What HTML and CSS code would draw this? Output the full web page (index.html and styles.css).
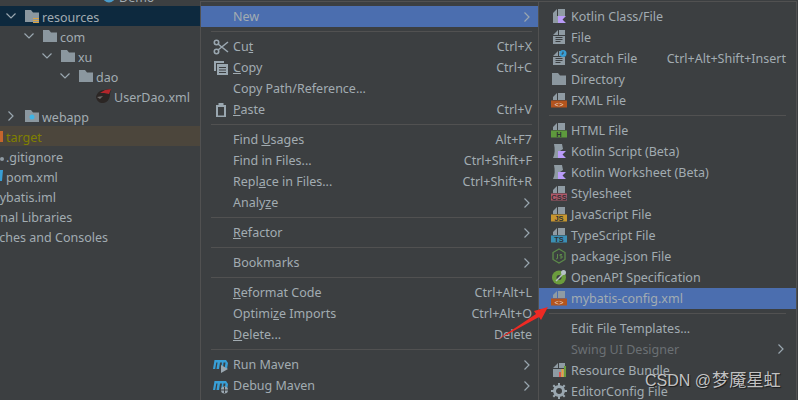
FILE: index.html
```html
<!DOCTYPE html>
<html>
<head>
    <title>New file menu</title>
    <link rel="stylesheet" href="styles.css">
</head>
<body>
    <svg class="sprite" width="0" height="0">
        <defs>
            <symbol id="chev-down" viewBox="0 0 16 16"><path d="M3.5 5.5 8 10l4.500-4.500" fill="none" stroke="#9aa7b0" stroke-width="1.200"/></symbol>
            <symbol id="chev-right" viewBox="0 0 16 16"><path d="M5.500 3.500 10 8l-4.500 4.500" fill="none" stroke="#9aa7b0" stroke-width="1.200"/></symbol>
            <symbol id="folder" viewBox="0 0 16 16"><path d="M1 2h6l2 2.500h6V14H1z" fill="#8b979f"/></symbol>
            <symbol id="doc" viewBox="0 0 16 16"><path d="M2 15V6l5-5v5H2zM2 7h12v8H2zM8 1h6v5H8z" fill="#8f9ba3"/></symbol>
            <symbol id="doc-top" viewBox="0 0 16 16"><path d="M2 8V5l4-4v7zM7 1h7v7H7z" fill="#8f9ba3"/></symbol>
            <symbol id="kotlin-mark" viewBox="0 0 16 16"><path d="M7 8h8l-3.500 3.500L15 15H7z" fill="#b99bf8"/></symbol>
        </defs>
    </svg>

    <div class="tree">
        <div class="tree-row lvl-3"><span class="arrow"></span><span class="icon"></span><svg class="icon"><circle cx="8" cy="8" r="6.500" fill="#4a9bc9"/></svg><span class="name">Demo</span></div>
        <div class="tree-row selected"><svg class="arrow"><use href="#chev-down"/></svg><svg class="icon"><use href="#folder"/><path d="M9 10h6v1H9zM9 12h6v1H9zM9 14h6v1H9z" fill="#d9a343"/></svg><span class="name">resources</span></div>
        <div class="tree-row lvl-1"><svg class="arrow"><use href="#chev-down"/></svg><svg class="icon"><use href="#folder"/></svg><span class="name">com</span></div>
        <div class="tree-row lvl-2"><svg class="arrow"><use href="#chev-down"/></svg><svg class="icon"><use href="#folder"/></svg><span class="name">xu</span></div>
        <div class="tree-row lvl-3"><svg class="arrow"><use href="#chev-down"/></svg><svg class="icon"><use href="#folder"/></svg><span class="name">dao</span></div>
        <div class="tree-row lvl-4"><span class="arrow"></span><svg class="icon"><path d="M0 9c1-4 4-7 8-7l7-1-1 5c0 5-3 9-7 9-4 0-6-2-7-6z" fill="#2b2624"/><path d="M4 5l5-3 6-1-2 5-5-1z" fill="#b3262b"/><path d="M1 9l6-1-3 3z" fill="#6e6a68"/></svg><span class="name">UserDao.xml</span></div>
        <div class="tree-row"><svg class="arrow"><use href="#chev-right"/></svg><svg class="icon"><use href="#folder"/><circle cx="8" cy="9" r="2.500" fill="#3fb4e6"/></svg><span class="name">webapp</span></div>
        <div class="tree-row excluded"><span class="arrow"></span><svg class="icon"><rect x="1" y="3" width="14" height="11" fill="#c4652d"/></svg><span class="name">target</span></div>
        <div class="tree-row lvl-root"><span class="arrow"></span><svg class="icon"><circle cx="14" cy="11" r="2" fill="#8f9ba3"/></svg><span class="name">.gitignore</span></div>
        <div class="tree-row lvl-root"><span class="arrow"></span><svg class="icon"><path d="M10 2h5l-1 11h-3z" fill="#389fd6"/></svg><span class="name">pom.xml</span></div>
        <div class="tree-row lvl-iml"><span class="arrow"></span><span class="icon"></span><span class="name">mybatis.iml</span></div>
        <div class="tree-row lvl-lib"><span class="arrow"></span><span class="icon"></span><span class="name">External Libraries</span></div>
        <div class="tree-row lvl-lib"><span class="arrow"></span><span class="icon"></span><span class="name">Scratches and Consoles</span></div>
    </div>

    <div class="menu main-menu">
        <div class="item active"><span class="item-icon"></span><span class="label">New</span><svg class="sub"><use href="#chev-right"/></svg></div>
        <div class="sep"></div>
        <div class="item">
            <svg class="item-icon" viewBox="0 0 16 16"><g fill="none" stroke="#9aa7b0" stroke-width="1.600"><circle cx="3.500" cy="3.500" r="2.200"/><circle cx="3.500" cy="12.500" r="2.200"/><path d="M5 5l10 8M5 11L15 3"/></g></svg>
            <span class="label">Cu<u>t</u></span><span class="keys">Ctrl+X</span>
        </div>
        <div class="item">
            <svg class="item-icon" viewBox="0 0 16 16"><path d="M1 1h10v2H3v8H1z" fill="#9aa7b0"/><path d="M4 4h11v11H4z" fill="#9aa7b0"/><path d="M6 7h7v1H6zM6 9.500h7v1H6zM6 12h7v1H6z" fill="#3c3f41"/></svg>
            <span class="label"><u>C</u>opy</span><span class="keys">Ctrl+C</span>
        </div>
        <div class="item"><span class="item-icon"></span><span class="label">Copy Path/Reference...</span></div>
        <div class="item">
            <svg class="item-icon" viewBox="0 0 16 16"><path d="M5.500 1h5v2h2.500v12H3V3h2.500z" fill="#9aa7b0"/><path d="M5 5h6v8.500H5z" fill="#3c3f41"/></svg>
            <span class="label"><u>P</u>aste</span><span class="keys">Ctrl+V</span>
        </div>
        <div class="sep"></div>
        <div class="item"><span class="item-icon"></span><span class="label">Find <u>U</u>sages</span><span class="keys">Alt+F7</span></div>
        <div class="item"><span class="item-icon"></span><span class="label">Find in Files...</span><span class="keys">Ctrl+Shift+F</span></div>
        <div class="item"><span class="item-icon"></span><span class="label">Repl<u>a</u>ce in Files...</span><span class="keys">Ctrl+Shift+R</span></div>
        <div class="item"><span class="item-icon"></span><span class="label">Analy<u>z</u>e</span><svg class="sub"><use href="#chev-right"/></svg></div>
        <div class="sep"></div>
        <div class="item"><span class="item-icon"></span><span class="label"><u>R</u>efactor</span><svg class="sub"><use href="#chev-right"/></svg></div>
        <div class="sep"></div>
        <div class="item"><span class="item-icon"></span><span class="label">Bookmarks</span><svg class="sub"><use href="#chev-right"/></svg></div>
        <div class="sep"></div>
        <div class="item"><span class="item-icon"></span><span class="label"><u>R</u>eformat Code</span><span class="keys">Ctrl+Alt+L</span></div>
        <div class="item"><span class="item-icon"></span><span class="label">Optimi<u>z</u>e Imports</span><span class="keys">Ctrl+Alt+O</span></div>
        <div class="item"><span class="item-icon"></span><span class="label"><u>D</u>elete...</span><span class="keys">Delete</span></div>
        <div class="sep"></div>
        <div class="item">
            <svg class="item-icon" viewBox="0 0 16 16"><path d="M0 12l1.500-9h11.500L15 6l-1 6h-2.500l1-6.500h-2L10 12H8l1-6.500H7L6 12H3.500l1-6.500H3.300L2.200 12z" fill="#389fd6"/><path d="M8 8l7 4-7 4z" fill="#9aa7b0"/></svg>
            <span class="label">Run Maven</span><svg class="sub"><use href="#chev-right"/></svg>
        </div>
        <div class="item">
            <svg class="item-icon" viewBox="0 0 16 16"><path d="M0 12l1.500-9h11.500L15 6l-1 6h-2.500l1-6.500h-2L10 12H8l1-6.500H7L6 12H3.500l1-6.500H3.300L2.200 12z" fill="#389fd6"/><circle cx="11.500" cy="12" r="3.500" fill="#9aa7b0"/><path d="M8 12h7M11.500 9v6" stroke="#3c3f41"/></svg>
            <span class="label">Debug Maven</span><svg class="sub"><use href="#chev-right"/></svg>
        </div>
    </div>

    <div class="menu sub-menu">
        <div class="item"><svg class="item-icon" viewBox="0 0 16 16"><path d="M2 8V5l4-4v7zM7 1h7v7H7zM2 8h5v7H2z" fill="#8f9ba3"/><use href="#kotlin-mark" width="16" height="16"/></svg><span class="label">Kotlin Class/File</span></div>
        <div class="item"><svg class="item-icon" viewBox="0 0 16 16"><use href="#doc" width="16" height="16"/><path d="M4.500 8h7v1h-7zM4.500 10h7v1h-7zM4.500 12h5v1h-5z" fill="#3c3f41"/></svg><span class="label">File</span></div>
        <div class="item"><svg class="item-icon" viewBox="0 0 16 16"><use href="#doc" width="16" height="16"/><path d="M4.500 8h7v1h-7zM4.500 10h7v1h-7zM4.500 12h5v1h-5z" fill="#3c3f41"/><circle cx="12" cy="3.500" r="3.500" fill="#389fd6"/><path d="M12 1.500v2.500h-1.500" stroke="#3c3f41" fill="none"/></svg><span class="label">Scratch File</span><span class="keys">Ctrl+Alt+Shift+Insert</span></div>
        <div class="item"><svg class="item-icon"><use href="#folder"/></svg><span class="label">Directory</span></div>
        <div class="item"><svg class="item-icon"><use href="#doc-top"/><rect y="8.500" width="16" height="7" fill="#b3541e"/></svg><span class="badge">&lt;&gt;</span><span class="label">FXML File</span></div>
        <div class="sep"></div>
        <div class="item"><svg class="item-icon"><use href="#doc-top"/><rect y="8.500" width="16" height="7" fill="#5e9a3d"/></svg><span class="badge dark">H</span><span class="label">HTML File</span></div>
        <div class="item"><svg class="item-icon" viewBox="0 0 16 16"><path d="M3 1h8l1 5-3 2v7H2c2-4 2-9 1-14z" fill="#8f9ba3"/><use href="#kotlin-mark" width="16" height="16"/></svg><span class="label">Kotlin Script (Beta)</span></div>
        <div class="item"><svg class="item-icon" viewBox="0 0 16 16"><path d="M3 1h8l1 5-3 2v7H2c2-4 2-9 1-14z" fill="#8f9ba3"/><use href="#kotlin-mark" width="16" height="16"/></svg><span class="label">Kotlin Worksheet (Beta)</span></div>
        <div class="item"><svg class="item-icon"><use href="#doc-top"/><rect y="8.500" width="16" height="7" fill="#b0586a"/></svg><span class="badge dark">CSS</span><span class="label">Stylesheet</span></div>
        <div class="item"><svg class="item-icon"><use href="#doc-top"/><rect y="8.500" width="16" height="7" fill="#c8962f"/></svg><span class="badge dark">JS</span><span class="label">JavaScript File</span></div>
        <div class="item"><svg class="item-icon"><use href="#doc-top"/><rect y="8.500" width="16" height="7" fill="#3b8fb5"/></svg><span class="badge dark">TS</span><span class="label">TypeScript File</span></div>
        <div class="item"><svg class="item-icon" viewBox="0 0 16 16"><path d="M8 1l6 3.500v7L8 15l-6-3.500v-7z" fill="none" stroke="#5c8a4a" stroke-width="1.300"/><path d="M6.500 6v4.500l-1.500.5M11 6.500H9v1.500h2v2H9" fill="none" stroke="#5c8a4a"/></svg><span class="label">package.json File</span></div>
        <div class="item"><svg class="item-icon" viewBox="0 0 16 16"><circle cx="8" cy="8.500" r="7" fill="#6b9c3d"/><circle cx="8" cy="8.500" r="2.500" fill="#3c3f41"/><path d="M5 12L12 5" stroke="#b8c2c8" stroke-width="1.500"/><circle cx="12.500" cy="3.500" r="2.500" fill="#b8c2c8"/></svg><span class="label">OpenAPI Specification</span></div>
        <div class="item active"><svg class="item-icon"><use href="#doc-top"/><rect y="8.500" width="16" height="7" fill="#b3541e"/></svg><span class="badge">&lt;&gt;</span><span class="label">mybatis-config.xml</span></div>
        <div class="sep"></div>
        <div class="item"><span class="item-icon"></span><span class="label">Edit File Templates...</span></div>
        <div class="item disabled"><span class="item-icon"></span><span class="label">Swing UI Designer</span><svg class="sub"><use href="#chev-right"/></svg></div>
        <div class="item"><svg class="item-icon" viewBox="0 0 16 16"><use href="#doc" width="16" height="16"/><path d="M8 10h2v5H8z" fill="#d9534f"/><path d="M10.500 7h2v8h-2z" fill="#e8a33d"/><path d="M13 4h2v11h-2z" fill="#6b9c3d"/></svg><span class="label">Resource Bundle</span></div>
        <div class="item"><svg class="item-icon" viewBox="0 0 16 16"><circle cx="8" cy="8" r="4.500" fill="none" stroke="#9aa7b0" stroke-width="3"/><path d="M8 0v3M8 13v3M0 8h3M13 8h3M2.300 2.300l2 2M11.700 11.700l2 2M13.700 2.300l-2 2M4.300 11.700l-2 2" stroke="#9aa7b0" stroke-width="2"/></svg><span class="label">EditorConfig File</span></div>
    </div>

    <svg class="pointer" width="60" height="44" viewBox="0 0 60 44"><path d="M2 38L41 12l-2-3L53 5l-7 13-2-3z" fill="#ee2a24"/></svg>
    <div class="watermark">CSDN @<span class="cjk">梦魇星虹</span></div>
</body>
</html>
```

FILE: styles.css
```css
body {
    margin: 0;
    width: 798px;
    height: 400px;
    overflow: hidden;
    display: flex;
    position: relative;
    background-color: #3c3f41;
    color: #a2acb2;
    font-family: "Noto Sans", "Noto Sans CJK SC", sans-serif;
    font-size: 12.500px;
}

.sprite {
    position: absolute;
}

/* Project tree */
.tree {
    width: 200px;
    flex: none;
    margin-top: -14px;
    overflow: hidden;
}

.tree-row {
    display: flex;
    align-items: center;
    height: 20px;
    padding-left: 3px;
    white-space: nowrap;
}

.tree-row .name {
    padding-top: 2px;
}

.tree-row.selected {
    background-color: #0d293e;
}

.tree-row.excluded {
    background-color: #4c463c;
    color: #808000;
    padding-left: 0;
}

.tree-row.excluded .arrow {
    margin-left: -33px;
}

.lvl-1 { margin-left: 18px; }
.lvl-2 { margin-left: 36px; }
.lvl-3 { margin-left: 54px; }
.lvl-4 { margin-left: 72px; }
.lvl-root { margin-left: -36px; }
.lvl-iml { margin-left: -54px; }
.lvl-lib { margin-left: -72px; }

.arrow {
    width: 16px;
    height: 16px;
    flex: none;
}

.icon {
    width: 16px;
    height: 16px;
    flex: none;
    margin: 0 2px 0 5px;
}

/* Popup menus */
.menu {
    flex: none;
    margin-top: 1px;
    height: max-content;
    padding: 4px 0;
    border: 1px solid #515151;
    border-right-width: 0;
    box-sizing: border-box;
}

.main-menu {
    width: 338px;
}

.sub-menu {
    width: 259px;
    padding-top: 3.500px;
    border-right: 1px solid #515151;
}

.item {
    display: flex;
    align-items: center;
    height: 21px;
    padding: 0 6px 0 12px;
    position: relative;
    white-space: nowrap;
}

.sub-menu .item {
    padding-right: 10px;
}

.item.active {
    background-color: #4b6eaf;
}

.item.disabled {
    color: #6b7074;
}

.item-icon {
    width: 16px;
    height: 16px;
    flex: none;
    margin-right: 4px;
}

.label {
    flex: 1;
}

.keys {
    flex: none;
}

.sub {
    width: 16px;
    height: 16px;
    flex: none;
    margin-right: -3px;
}

.sep {
    height: 1px;
    margin: 4px 6px 4px 10px;
    background-color: #515151;
}

.sub-menu .sep {
    margin-right: 10px;
}

.badge {
    position: absolute;
    left: 12px;
    top: 11px;
    width: 16px;
    text-align: center;
    font-family: "Liberation Sans", sans-serif;
    font-size: 7.500px;
    line-height: 7px;
    color: #ecd6c8;
}

.badge.dark {
    color: #2f3234;
    font-weight: bold;
}

/* Annotation over the screenshot */
.pointer {
    position: absolute;
    left: 495px;
    top: 302px;
}

.watermark {
    position: absolute;
    left: 645px;
    top: 369px;
    font-family: "Liberation Sans", "Noto Sans CJK SC", sans-serif;
    font-size: 16px;
    line-height: 22px;
    color: rgba(214, 214, 214, 0.9);
    text-shadow: 1px 1px 1px rgba(0, 0, 0, 0.55);
}

.cjk {
    font-size: 17.200px;
    margin-left: 1px;
}
```
